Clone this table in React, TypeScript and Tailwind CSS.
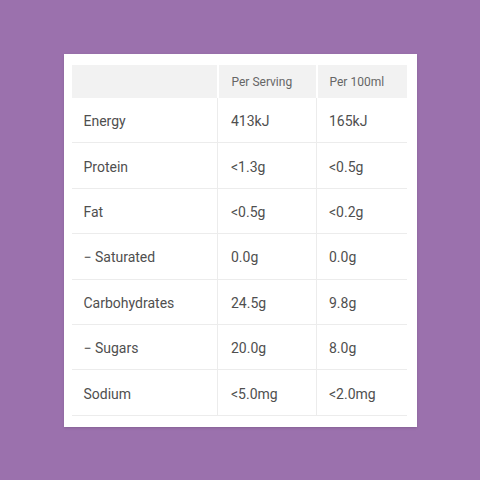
const rows: [string, string, string][] = [
  ['Energy', '413kJ', '165kJ'],
  ['Protein', '<1.3g', '<0.5g'],
  ['Fat', '<0.5g', '<0.2g'],
  ['− Saturated', '0.0g', '0.0g'],
  ['Carbohydrates', '24.5g', '9.8g'],
  ['− Sugars', '20.0g', '8.0g'],
  ['Sodium', '<5.0mg', '<2.0mg'],
];

export default function App() {
  return (
    <div
      className="w-[480px] h-[480px] bg-[#9b71ad] flex items-center justify-center"
      style={{ fontFamily: 'Roboto, "Liberation Sans", sans-serif' }}
    >
      <div className="w-[353px] h-[373px] bg-white pl-[8px] pr-[10px] pt-[11px] shadow-sm">
        <table className="w-[335px] border-collapse table-fixed">
          <colgroup>
            <col className="w-[146px]" />
            <col className="w-[99px]" />
            <col className="w-[90px]" />
          </colgroup>
          <thead>
            <tr className="h-[33px] bg-[#f2f2f2]">
              <th className="border-r-2 border-white"></th>
              <th className="border-r-2 border-white text-left font-normal text-[12px] text-[#666] pl-[13px] pt-[1px]">
                Per Serving
              </th>
              <th className="text-left font-normal text-[12px] text-[#666] pl-[12px] pt-[1px]">Per 100ml</th>
            </tr>
          </thead>
          <tbody>
            {rows.map(([label, a, b]) => (
              <tr key={label} className="h-[45.4px] border-b border-[#ececec]">
                <td className="border-r border-[#ececec] pl-[12px] pt-[3px] text-[14px] text-[#4f4f4f]">{label}</td>
                <td className="border-r border-[#ececec] pl-[13px] pt-[3px] text-[14px] text-[#4f4f4f]">{a}</td>
                <td className="pl-[12px] pt-[3px] text-[14px] text-[#4f4f4f]">{b}</td>
              </tr>
            ))}
          </tbody>
        </table>
      </div>
    </div>
  );
}
